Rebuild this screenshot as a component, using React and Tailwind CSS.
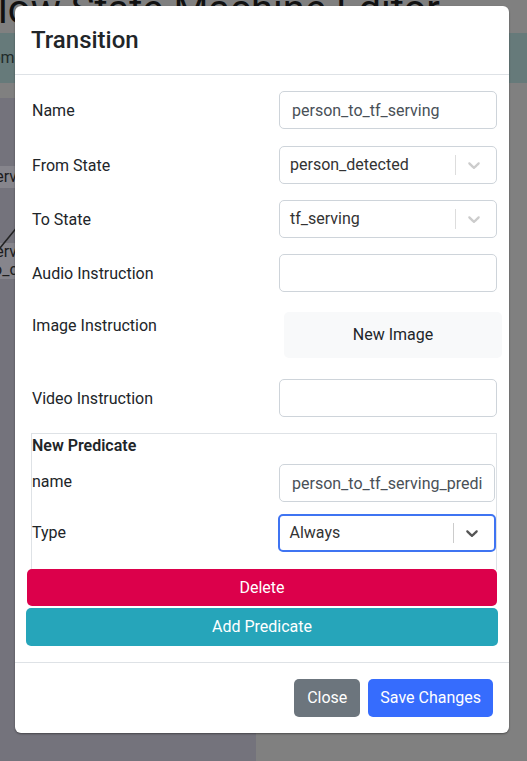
import React from "react";

const Chevron = ({ color }) => (
  <svg viewBox="0 0 20 20" width="20" height="20" fill={color}>
    <path d="M4.516 7.548c0.436-0.446 1.043-0.481 1.576 0l3.908 3.747 3.908-3.747c0.533-0.481 1.141-0.446 1.574 0 0.436 0.445 0.408 1.197 0 1.615-0.406 0.418-4.695 4.502-4.695 4.502-0.217 0.223-0.502 0.335-0.787 0.335s-0.57-0.112-0.789-0.335c0 0-4.287-4.084-4.695-4.502s-0.436-1.17 0-1.615z" />
  </svg>
);

const TextInput = ({ value = "", className = "w-[218px]" }) => (
  <input
    readOnly
    value={value}
    className={`${className} h-[38px] rounded-[5px] border border-[#ced4da] bg-white px-3 text-base text-[#495057] outline-none`}
  />
);

const Select = ({ value, focused }) => (
  <div
    className={`flex h-[38px] w-[218px] items-center rounded-[5px] bg-white ${
      focused ? "border-2 border-[#3f74f2]" : "border border-[#ced4da]"
    }`}
  >
    <span className={`flex-1 text-base text-[#333] ${focused ? "pl-[9px]" : "pl-[10px]"}`}>{value}</span>
    <span className={`h-[20px] w-px ${focused ? "bg-[#ccc]" : "bg-[#ddd]"}`} />
    <span className="ml-[8px] mr-[12px] flex">
      <Chevron color={focused ? "#555" : "#ccc"} />
    </span>
  </div>
);

const Row = ({ label, children, gap = "mb-4" }) => (
  <div className={`${gap} flex items-center`}>
    <label className="w-[248px] pl-px pt-px text-base text-[#212529]">{label}</label>
    {children}
  </div>
);

export default function App() {
  return (
    <div
      className="relative h-[761px] w-[527px] overflow-hidden bg-[#808080]"
      style={{ fontFamily: "Roboto, 'Liberation Sans', sans-serif" }}
    >
      {/* dimmed page behind the modal */}
      <div className="flex h-full flex-col">
        <div className="h-[33px] overflow-visible">
          <h1 className="-ml-[24px] -mt-[14px] whitespace-nowrap text-[40px] leading-[48px] text-[#111]">
            Flow State Machine Editor
          </h1>
        </div>
        <div className="flex h-[50px] items-center bg-[#667a7a] text-base text-[#1f2a2a]">
          <span className="-ml-[20px]">Home</span>
        </div>
        <div className="h-[15px]" />
        <div className="flex flex-1">
          <div className="relative w-[256px] bg-[#74737c]">
            <div className="mt-[68px] flex h-[22px] w-[40px] items-center bg-[#86858c] text-base text-[#1c1c1c]">
              <span className="-ml-[13px]">serv</span>
            </div>
            <svg className="absolute left-0 top-[126px]" width="20" height="26">
              <line x1="0" y1="24" x2="18" y2="2" stroke="#222" strokeWidth="1.5" />
            </svg>
            <div className="mt-[55px] h-[36px] w-[40px] bg-[#86858c] text-base leading-[18px] text-[#1c1c1c]">
              <div className="-ml-[13px]">serv</div>
              <div className="-ml-[12px]">to_c</div>
            </div>
          </div>
          <div className="flex-1 bg-[#808080]" />
        </div>
      </div>

      {/* modal */}
      <div className="absolute left-[15px] top-[6px] w-[494px] rounded-[6px] bg-white shadow-[0_1px_2px_rgba(0,0,0,0.4)]">
        <div className="border-b border-[#dee2e6] px-4 py-4">
          <h4 className="text-[24px] font-medium leading-[36px] text-[#212529]">Transition</h4>
        </div>

        <div className="py-4 pl-4">
          <Row label="Name" gap="mb-[17px]">
            <TextInput value="person_to_tf_serving" />
          </Row>
          <Row label="From State">
            <Select value="person_detected" />
          </Row>
          <Row label="To State">
            <Select value="tf_serving" />
          </Row>
          <Row label="Audio Instruction">
            <TextInput />
          </Row>
          <div className="mb-[21px] flex items-start">
            <label className="mt-[6px] w-[253px] pl-px text-base text-[#212529]">Image Instruction</label>
            <button className="mt-[4px] h-[46px] w-[218px] rounded-[5px] bg-[#f8f9fa] text-base text-[#212529]">
              New Image
            </button>
          </div>
          <Row label="Video Instruction">
            <TextInput />
          </Row>

          <div className="-mb-px w-[466px] border border-b-0 border-[#dee2e6] pb-[18px]">
            <div className="text-base font-semibold leading-[24px] text-[#212529]">New Predicate</div>
            <div className="mt-[6px] flex items-center">
              <label className="-mt-[3px] w-[247px] text-base text-[#212529]">name</label>
              <TextInput value="person_to_tf_serving_predicate" className="w-[216px]" />
            </div>
            <div className="mt-[12px] flex items-center">
              <label className="w-[247px] text-base text-[#212529]">Type</label>
              <Select value="Always" focused />
            </div>
          </div>
          <button className="-ml-[4px] block h-[37px] w-[470px] rounded-[5px] bg-[#dc004b] text-base text-white">
            Delete
          </button>
          <button className="-ml-[5px] mt-[2px] block h-[38px] w-[472px] rounded-[5px] bg-[#26a5ba] text-base text-white">
            Add Predicate
          </button>
        </div>

        <div className="flex justify-end gap-2 border-t border-[#dee2e6] p-4">
          <button className="h-[38px] rounded-[5px] bg-[#6c757d] px-[13px] text-base text-white">Close</button>
          <button className="h-[38px] rounded-[5px] bg-[#366cfd] px-3 text-base text-white">Save Changes</button>
        </div>
      </div>
    </div>
  );
}
